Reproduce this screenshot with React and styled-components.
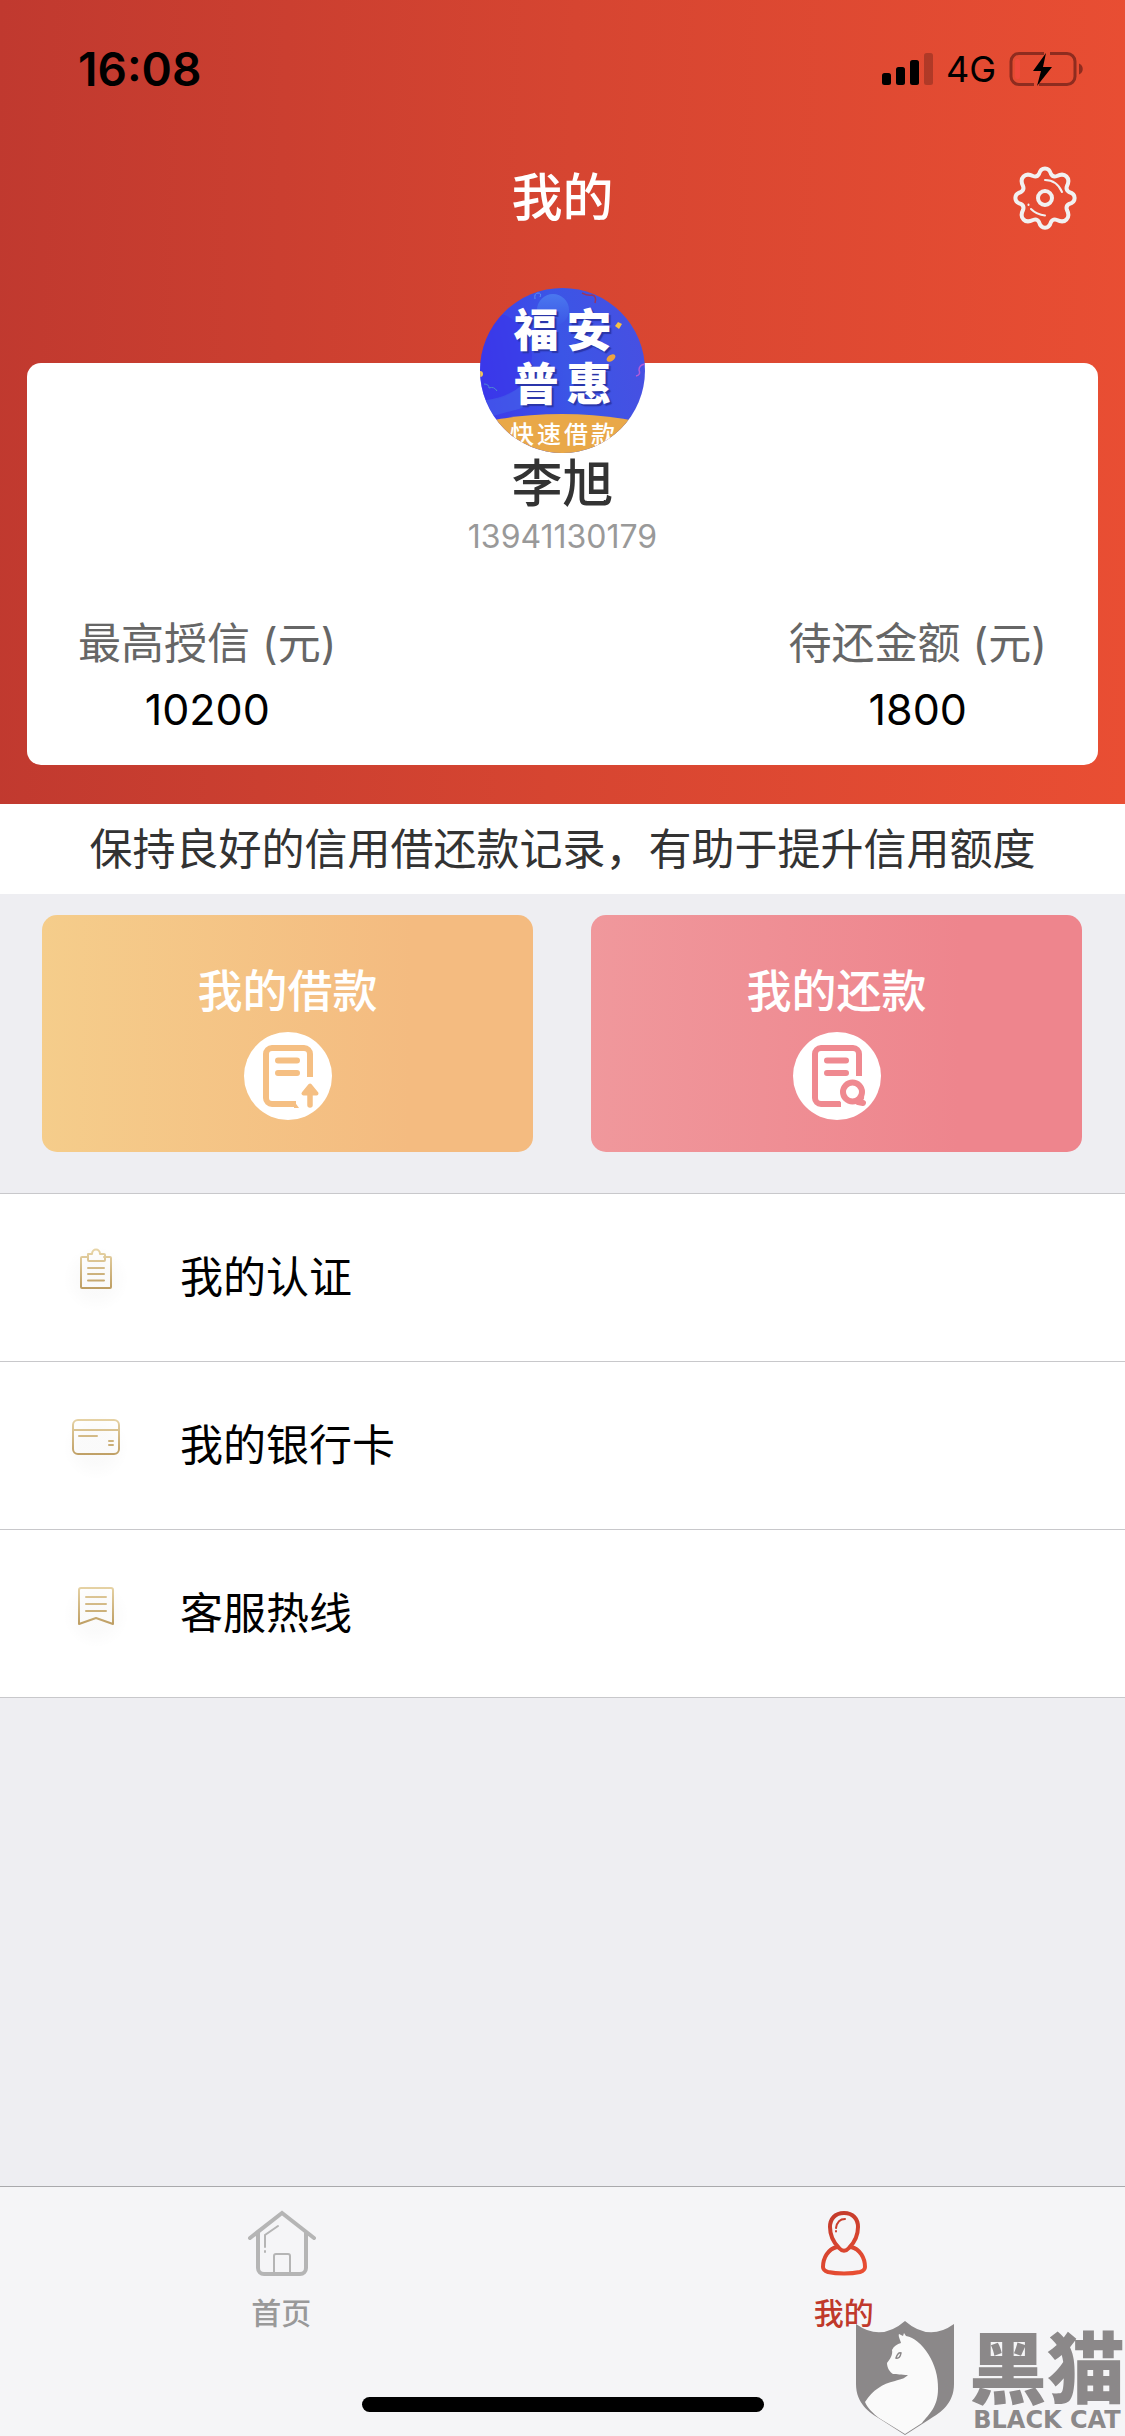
import React from "react";
import styled, { createGlobalStyle } from "styled-components";

const Global = createGlobalStyle`
  *, *::before, *::after { box-sizing: border-box; }
  html, body, #root { height: 100%; }
  body {
    margin: 0;
    background: #eeeef2;
    font-family: Inter, "Noto Sans CJK SC", sans-serif;
    color: #000;
  }
  button { font: inherit; border: 0; padding: 0; background: none; cursor: pointer; }
  h1, h2, p, dl, dd, ul { margin: 0; padding: 0; }
  svg { display: block; flex: none; }
`;

const Page = styled.div`
  min-height: 100%;
  display: flex;
  flex-direction: column;
`;

const Header = styled.header`
  background: linear-gradient(92deg, #c0392f 0%, #d64531 50%, #e94e33 100%);
  padding-bottom: 39px;
`;

const StatusBar = styled.div`
  display: flex;
  justify-content: space-between;
  align-items: center;
  height: 132px;
  padding: 6px 42px 0 78px;
`;

const Clock = styled.time`
  font-size: 46px;
  font-weight: 600;
  line-height: 60px;
`;

const StatusIcons = styled.div`
  display: flex;
  align-items: center;
  gap: 13px;
  font-size: 36px;
  font-weight: 400;
  line-height: 48px;
`;

const NavBar = styled.div`
  display: grid;
  grid-template-columns: 1fr auto 1fr;
  align-items: center;
  height: 132px;
  padding: 0 48px;
`;

const Title = styled.h1`
  grid-column: 2;
  color: #fff;
  font-size: 51px;
  font-weight: 500;
  line-height: 66px;
`;

const SettingsButton = styled.button`
  justify-self: end;
`;

const ProfileCard = styled.section`
  display: flex;
  flex-direction: column;
  align-items: center;
  margin: 99px 27px 0;
  padding: 0 51px 23px;
  border-radius: 14px;
  background: #fff;
`;

const Avatar = styled.div`
  position: relative;
  width: 165px;
  height: 165px;
  margin-top: -75px;
  border-radius: 50%;
  overflow: hidden;
  color: #fff;
`;

const AvatarArt = styled.svg`
  position: absolute;
  inset: 0;
`;

const AvatarText = styled.div`
  position: relative;
  display: flex;
  flex-direction: column;
  align-items: center;
  gap: 6px;
  padding-top: 16px;
`;

const BrandGrid = styled.div`
  display: grid;
  grid-template-columns: auto auto;
  column-gap: 8px;
  font-size: 45px;
  font-weight: 900;
  line-height: 54px;
  text-shadow: 2px 2px 1px #2a35a8;
`;

const BrandTag = styled.div`
  display: flex;
  gap: 3px;
  font-size: 24px;
  font-weight: 500;
  line-height: 34px;
`;

const UserName = styled.h2`
  color: #333;
  font-size: 51px;
  font-weight: 500;
  line-height: 62px;
`;

const Phone = styled.p`
  color: #999;
  font-size: 32px;
  line-height: 44px;
`;

const Stats = styled.dl`
  align-self: stretch;
  display: flex;
  justify-content: space-between;
  margin-top: 51px;
  font-size: 43px;
  line-height: 66px;
  text-align: center;
`;

const StatLabel = styled.dt`
  color: #666;
`;

const Tip = styled.p`
  background: #fff;
  color: #333;
  font-size: 43px;
  line-height: 90px;
  text-align: center;
`;

const Tiles = styled.div`
  display: grid;
  grid-template-columns: 1fr 1fr;
  gap: 58px;
  padding: 21px 43px 41px 42px;
`;

const Tile = styled.button`
  display: flex;
  flex-direction: column;
  align-items: center;
  height: 237px;
  padding-top: 47px;
  gap: 10px;
  border-radius: 15px;
  color: #fff;
  font-size: 45px;
  font-weight: 500;
  line-height: 60px;
  background: linear-gradient(91deg, ${(p) => p.$from}, ${(p) => p.$to} 75%);
`;

const Menu = styled.ul`
  list-style: none;
  border-top: 1px solid #c8c8cb;
  background: #fff;
`;

const MenuItem = styled.button`
  display: flex;
  align-items: center;
  gap: 48px;
  width: 100%;
  height: 168px;
  padding: 0 60px 2px;
  border-bottom: 1px solid #c8c8cb;
  color: #000;
  font-size: 43px;
  line-height: 60px;
`;

const TabBar = styled.nav`
  position: relative;
  display: grid;
  grid-template-columns: 1fr 1fr;
  align-items: start;
  height: 250px;
  margin-top: auto;
  border-top: 1px solid #a9a9ac;
  background: #f5f5f7;
`;

const Tab = styled.a`
  display: flex;
  flex-direction: column;
  align-items: center;
  gap: 12px;
  padding-top: 20px;
  color: ${(p) => (p.$active ? "#c0392b" : "#999")};
  font-size: 30px;
  font-weight: 500;
  line-height: 44px;
  text-decoration: none;
`;

const HomeIndicator = styled.div`
  position: absolute;
  bottom: 24px;
  left: 50%;
  width: 402px;
  height: 15px;
  margin-left: -201px;
  border-radius: 8px;
  background: #000;
`;

const Watermark = styled.div`
  position: absolute;
  right: 0;
  bottom: 0;
  display: flex;
  align-items: flex-end;
  gap: 15px;
  color: #8b8889;
`;

const WatermarkText = styled.div`
  display: flex;
  flex-direction: column;
  align-items: center;
  padding-bottom: 2px;
`;

const WatermarkName = styled.span`
  font-family: "Noto Sans CJK SC", sans-serif;
  font-size: 78px;
  font-weight: 900;
  line-height: 84px;
`;

const WatermarkLatin = styled.span`
  font-family: "DejaVu Sans", sans-serif;
  font-size: 24px;
  font-weight: 700;
  line-height: 28px;
  white-space: nowrap;
`;

const SignalIcon = () => (
  <svg width="51" height="32" viewBox="0 0 51 32" aria-hidden="true">
    <rect x="0" y="20" width="9" height="12" rx="2.5" />
    <rect x="14" y="14" width="9" height="18" rx="2.5" />
    <rect x="28" y="7" width="9" height="25" rx="2.5" />
    <rect x="42" y="0" width="9" height="32" rx="2.5" opacity="0.22" />
  </svg>
);

const BatteryIcon = () => (
  <svg width="74" height="36" viewBox="0 0 74 36" aria-hidden="true">
    <g fill="none" stroke="#8e2c1f" strokeWidth="3">
      <path d="M35 2.500H10a8 8 0 0 0-8 8v15a8 8 0 0 0 8 8h15" />
      <path d="M41 2.500h17a8 8 0 0 1 8 8v15a8 8 0 0 1-8 8H30" />
    </g>
    <rect x="6" y="8" width="5" height="20" rx="2" fill="#f04a3c" />
    <path d="M70 12.500c5 2 5 9 0 11z" fill="#8e2c1f" />
    <path d="M37 2 24 20h8l-4 15 15-19h-9z" />
  </svg>
);

const GearIcon = () => (
  <svg width="64" height="64" viewBox="-32 -32 64 64" fill="none" stroke="#f1f1f1" strokeLinecap="round" strokeLinejoin="round" aria-hidden="true">
    <path
      strokeWidth="4"
      d="M-6-24C-4-31.500 4-31.500 6-24Q8-20.500 12-22C20-26 26-20 22-12Q20.500-8 24-6C31.500-4 31.500 4 24 6Q20.500 8 22 12C26 20 20 26 12 22Q8 20.500 6 24C4 31.500-4 31.500-6 24Q-8 20.500-12 22C-20 26-26 20-22 12Q-20.500 8-24 6C-31.500 4-31.500-4-24-6Q-20.500-8-22-12C-26-20-20-26-12-22Q-8-20.500-6-24Z"
    />
    <circle r="7" strokeWidth="4" />
    <path strokeWidth="2" d="M0-18C8-18 14-13 17-6M0 17.500C-6 17-10 15-14 11M-16.500 6.500v.5" />
  </svg>
);

const AvatarBackdrop = () => (
  <AvatarArt width="165" height="165" viewBox="0 0 165 165" aria-hidden="true">
    <defs>
      <linearGradient id="sky" x1="0" y1="0.500" x2="1" y2="0.300">
        <stop offset="0" stopColor="#3d3bea" />
        <stop offset="0.500" stopColor="#3b55e6" />
        <stop offset="1" stopColor="#4750e2" />
      </linearGradient>
      <linearGradient id="bubble" x1="0" y1="0" x2="0" y2="1">
        <stop offset="0" stopColor="#4a78ef" />
        <stop offset="1" stopColor="#3b55e6" />
      </linearGradient>
    </defs>
    <rect width="165" height="165" fill="url(#sky)" />
    <circle cx="8" cy="68" r="44" fill="#3733ea" opacity="0.500" />
    <path d="M6 112q20-2 35-14l16 18-44 12z" fill="#4668ea" opacity="0.500" />
    <circle cx="73" cy="22" r="16" fill="url(#bubble)" />
    <path d="M55 11q-1-6 3-6 4 0 2 4" fill="none" stroke="#5a8ff0" />
    <path d="M102 5q6 3 10 2 5 1 3 8" fill="none" stroke="#9a3560" strokeWidth="1.500" />
    <path d="M4 96q5 0 5 4 5-2 8 3" fill="none" stroke="#4f8ad0" />
    <path d="M156 88q5-1 3-6 0-5 6-6" fill="none" stroke="#b35bd8" strokeWidth="1.500" />
    <path d="m135 38 3-4 4 2-3 5z" fill="#f6c143" />
    <ellipse cx="131" cy="70" rx="5" ry="3" transform="rotate(-35 131 70)" fill="#eda441" />
    <circle cx="0" cy="86" r="3" fill="#f0c45a" />
    <ellipse cx="82" cy="190" rx="160" ry="64" fill="#e9a848" />
  </AvatarArt>
);

const LoanIcon = () => (
  <svg width="88" height="88" viewBox="0 0 88 88" aria-hidden="true">
    <circle cx="44" cy="44" r="44" fill="#fff" />
    <g fill="none" stroke="#f5bf83" strokeWidth="6">
      <path d="M66 45V22a6 6 0 0 0-6-6H28a6 6 0 0 0-6 6v44a6 6 0 0 0 6 6h24" />
      <path d="M34 28.500h19M34 41h19" strokeLinecap="round" />
      <path d="M66 60v13" strokeWidth="5.500" strokeLinecap="round" />
    </g>
    <path d="m50 69 5 7h-5z" fill="#f5bf83" />
    <path d="M66 53.500 59.500 61.500h13z" fill="#f5bf83" stroke="#f5bf83" strokeWidth="4" strokeLinejoin="round" />
  </svg>
);

const RepayIcon = () => (
  <svg width="88" height="88" viewBox="0 0 88 88" aria-hidden="true">
    <circle cx="44" cy="44" r="44" fill="#fff" />
    <g fill="none" stroke="#ef8990" strokeWidth="6">
      <path d="M66 44V22a6 6 0 0 0-6-6H28a6 6 0 0 0-6 6v44a6 6 0 0 0 6 6h20" />
      <path d="M34 28.500h19M34 41h19" strokeLinecap="round" />
    </g>
    <circle cx="59.500" cy="60" r="15.500" fill="#fff" />
    <circle cx="59.500" cy="60" r="9.500" fill="none" stroke="#ef8990" strokeWidth="6" />
    <path d="m68 66-3 4 5 1" fill="none" stroke="#ef8990" strokeWidth="6" strokeLinecap="round" strokeLinejoin="round" />
  </svg>
);

const GoldIcon = ({ id, children }) => (
  <svg width="72" height="72" viewBox="0 0 72 72" fill="none" stroke={`url(#${id})`} strokeWidth="2" strokeLinecap="round" strokeLinejoin="round" aria-hidden="true">
    <defs>
      <linearGradient id={id} gradientUnits="userSpaceOnUse" x1="0" y1="8" x2="0" y2="48">
        <stop offset="0" stopColor="#e8d5a8" />
        <stop offset="1" stopColor="#bd9d62" />
      </linearGradient>
      <radialGradient id={`${id}Glow`}>
        <stop offset="0.500" stopColor="#000" stopOpacity="0.018" />
        <stop offset="1" stopColor="#000" stopOpacity="0" />
      </radialGradient>
    </defs>
    <circle cx="36" cy="38" r="33" fill={`url(#${id}Glow)`} stroke="none" />
    {children}
  </svg>
);

const ClipboardIcon = () => (
  <GoldIcon id="goldClip">
    <path d="M28 16h-6a1 1 0 0 0-1 1v29a1 1 0 0 0 1 1h28a1 1 0 0 0 1-1V17a1 1 0 0 0-1-1h-6" />
    <path d="M28 13h4c0-6 8-6 8 0h4a1 1 0 0 1 1 1v5a1 1 0 0 1-1 1H29a1 1 0 0 1-1-1zM28 27h16M28 33h16M28 39.500h16" />
  </GoldIcon>
);

const CardIcon = () => (
  <GoldIcon id="goldCard">
    <rect x="13" y="11" width="46" height="34" rx="5" />
    <path d="M13 21h46M19 27h18M49 32h4M49 36h4" />
  </GoldIcon>
);

const HotlineIcon = () => (
  <GoldIcon id="goldLine">
    <path d="M19 47V13a2 2 0 0 1 2-2h30a2 2 0 0 1 2 2v34l-17-6zM26 20h20M26 27h20M26 34h20" />
  </GoldIcon>
);

const HomeIcon = () => (
  <svg width="72" height="72" viewBox="0 0 72 72" fill="none" stroke="#b5b5b5" strokeLinecap="round" aria-hidden="true">
    <path strokeWidth="4" d="M5 31 37 6l32 25M13 26v35a6 6 0 0 0 6 6h36a6 6 0 0 0 6-6V26" />
    <path strokeWidth="2" d="M29 66V49a2 2 0 0 1 2-2h12a2 2 0 0 1 2 2v17M20 40V28l13-9M20 44v1" />
  </svg>
);

const PersonIcon = () => (
  <svg width="72" height="72" viewBox="0 0 72 72" fill="none" stroke="url(#person)" strokeLinecap="round" aria-hidden="true">
    <defs>
      <linearGradient id="person" gradientUnits="userSpaceOnUse" x1="14" y1="4" x2="44" y2="68">
        <stop offset="0" stopColor="#c0392b" />
        <stop offset="1" stopColor="#e94e33" />
      </linearGradient>
    </defs>
    <path strokeWidth="4" d="M36 6c-9 0-14 6-14 14 0 8 4 16 9 21 3 3.500 7 3.500 10 0 5-5 9-13 9-21 0-8-5-14-14-14z" />
    <path strokeWidth="4" d="M29 40c-9 2-14 11-14 20 0 3 2 4 5 5 9 2 23 2 32 0 3-1 5-2 5-5 0-9-5-18-14-20" />
    <path strokeWidth="2" d="M37 12c-5 0-8 3-9 9M28 24v.5" />
  </svg>
);

const CatShield = () => (
  <svg width="98" height="115" viewBox="0 0 98 115" aria-hidden="true">
    <path d="M0 3q25 18 49-3 24 21 49 3v60c0 20-14 29-24 35L49 114 24 98C14 92 0 83 0 63z" fill="#8b8889" />
    <path d="M45 22c-1-4-3-7-2-9l4 2 1-3 2 3C66 18 83 43 82 68c0 18-9 25-16 34l-17 11L23 97C17 92 12 88 9 81c8-12 17-18 30-21 6-2 9-2 13-6-7 0-11-1-15-1-3-2-6-6-6-11 3-4 6-8 5-13 2-4 5-6 9-7z" fill="#fafafa" />
    <path d="M40 37q2-6 5-5-1 6-5 5z" fill="none" stroke="#8b8889" strokeWidth="1.500" />
  </svg>
);

const stats = [
  { label: "最高授信 (元)", value: "10200" },
  { label: "待还金额 (元)", value: "1800" },
];

const menu = [
  { label: "我的认证", Icon: ClipboardIcon },
  { label: "我的银行卡", Icon: CardIcon },
  { label: "客服热线", Icon: HotlineIcon },
];

export default function App() {
  return (
    <Page lang="zh-CN">
      <Global />
      <Header>
        <StatusBar>
          <Clock>16:08</Clock>
          <StatusIcons>
            <SignalIcon />
            <span>4G</span>
            <BatteryIcon />
          </StatusIcons>
        </StatusBar>
        <NavBar>
          <Title>我的</Title>
          <SettingsButton type="button" aria-label="设置">
            <GearIcon />
          </SettingsButton>
        </NavBar>
        <ProfileCard>
          <Avatar>
            <AvatarBackdrop />
            <AvatarText>
              <BrandGrid>
                {[..."福安普惠"].map((c) => (
                  <span key={c}>{c}</span>
                ))}
              </BrandGrid>
              <BrandTag>
                {[..."快速借款"].map((c) => (
                  <span key={c}>{c}</span>
                ))}
              </BrandTag>
            </AvatarText>
          </Avatar>
          <UserName>李旭</UserName>
          <Phone>13941130179</Phone>
          <Stats>
            {stats.map((s) => (
              <div key={s.label}>
                <StatLabel>{s.label}</StatLabel>
                <dd>{s.value}</dd>
              </div>
            ))}
          </Stats>
        </ProfileCard>
      </Header>
      <Tip>保持良好的信用借还款记录，有助于提升信用额度</Tip>
      <Tiles>
        <Tile type="button" $from="#f5cd8b" $to="#f4bb80">
          <span>我的借款</span>
          <LoanIcon />
        </Tile>
        <Tile type="button" $from="#f0989c" $to="#ee858d">
          <span>我的还款</span>
          <RepayIcon />
        </Tile>
      </Tiles>
      <Menu>
        {menu.map(({ label, Icon }) => (
          <li key={label}>
            <MenuItem type="button">
              <Icon />
              <span>{label}</span>
            </MenuItem>
          </li>
        ))}
      </Menu>
      <TabBar>
        <Tab href="#home">
          <HomeIcon />
          <span>首页</span>
        </Tab>
        <Tab href="#mine" $active aria-current="page">
          <PersonIcon />
          <span>我的</span>
        </Tab>
        <HomeIndicator />
        <Watermark>
          <CatShield />
          <WatermarkText>
            <WatermarkName>黑猫</WatermarkName>
            <WatermarkLatin>BLACK CAT</WatermarkLatin>
          </WatermarkText>
        </Watermark>
      </TabBar>
    </Page>
  );
}
